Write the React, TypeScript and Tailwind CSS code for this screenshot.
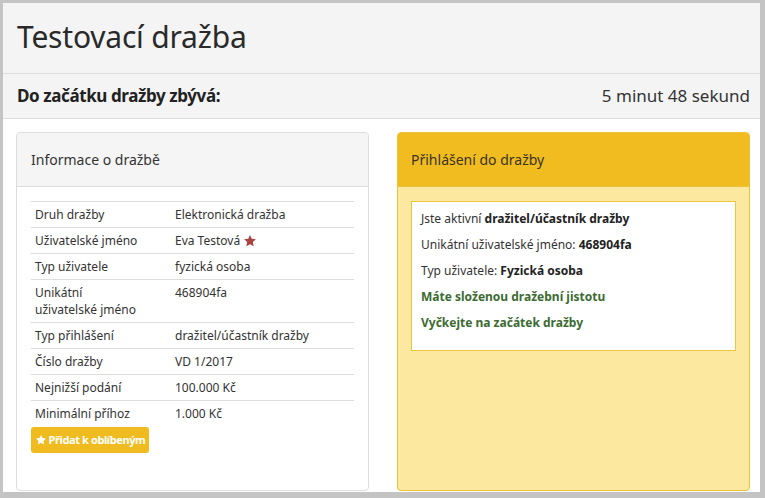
import React from 'react';

const font = { fontFamily: '"Noto Sans", "Open Sans", sans-serif' };

function Star({ className }: { className?: string }) {
  return (
    <svg viewBox="0 0 24 24" className={className} fill="currentColor" aria-hidden="true">
      <path d="M12 1.8l3.05 6.4 7.05.85-5.2 4.85 1.38 6.95L12 17.4l-6.28 3.45 1.38-6.95-5.2-4.85 7.05-.85z" />
    </svg>
  );
}

const rows: { label: React.ReactNode; value: React.ReactNode }[] = [
  { label: 'Druh dražby', value: 'Elektronická dražba' },
  {
    label: 'Uživatelské jméno',
    value: (
      <span className="inline-flex items-center gap-[3px]">
        Eva Testová <Star className="w-[14px] h-[14px] text-[#a94442]" />
      </span>
    ),
  },
  { label: 'Typ uživatele', value: 'fyzická osoba' },
  {
    label: (
      <>
        Unikátní
        <br />
        uživatelské jméno
      </>
    ),
    value: '468904fa',
  },
  { label: 'Typ přihlášení', value: 'dražitel/účastník dražby' },
  { label: 'Číslo dražby', value: 'VD 1/2017' },
  { label: 'Nejnižší podání', value: '100.000 Kč' },
  { label: 'Minimální příhoz', value: '1.000 Kč' },
];

export default function App() {
  return (
    <div className="w-[765px] h-[498px] bg-[#c4c4c4] pt-[3px] pl-[3px] pr-[5px] pb-[6px]" style={font}>
      <div className="bg-white h-full overflow-hidden flex flex-col text-[#333]">
        {/* Title */}
        <div className="h-[71px] shrink-0 bg-[#f4f4f4] border-b border-[#dcdcdc] flex items-center px-[14px]">
          <h1 className="text-[30px] leading-none text-[#2a2a2a] tracking-[-0.2px] pb-[2px]">Testovací dražba</h1>
        </div>

        {/* Countdown */}
        <div className="h-[45px] shrink-0 bg-[#f4f4f4] border-b border-[#dcdcdc] flex items-center justify-between pl-[14px] pr-[10px]">
          <span className="text-[17px] font-bold text-[#222] tracking-[-0.4px]">Do začátku dražby zbývá:</span>
          <span className="text-[17px] text-[#333]">5 minut 48 sekund</span>
        </div>

        <div className="flex-1 flex gap-[28px] pl-[13px] pr-[10px] pt-[13px] pb-[1px] min-h-0">
          {/* Left panel */}
          <div className="w-[353px] border border-[#dddddd] rounded-[4px] flex flex-col">
            <div className="h-[54px] shrink-0 bg-[#f5f5f5] border-b border-[#dddddd] flex items-center px-[14px] rounded-t-[4px]">
              <span className="text-[14px] text-[#333]">Informace o dražbě</span>
            </div>
            <div className="px-[14px] pt-[14px]">
              <table className="w-full text-[12px] text-[#333] border-collapse">
                <tbody>
                  {rows.map((r, i) => (
                    <tr key={i} className="border-t border-[#dddddd]">
                      <td className="w-[144px] pl-[4px] pr-[8px] py-[4px] align-top leading-[17px]">{r.label}</td>
                      <td className="py-[4px] align-top leading-[17px]">{r.value}</td>
                    </tr>
                  ))}
                </tbody>
              </table>
              <button className="mt-[1px] h-[26px] w-[118px] bg-[#efbb1f] rounded-[3px] text-white text-[11px] font-bold flex items-center justify-center gap-[2px] tracking-[-0.4px] whitespace-nowrap">
                <Star className="w-[12px] h-[12px] shrink-0" />
                Přidat k oblíbeným
              </button>
            </div>
          </div>

          {/* Right panel */}
          <div className="w-[353px] border border-[#ecc23a] rounded-[4px] bg-[#fde8a0] flex flex-col">
            <div className="h-[54px] shrink-0 bg-[#f0bc1f] border-b border-[#ecc23a] flex items-center px-[13px] rounded-t-[3px]">
              <span className="text-[14px] text-[#3b3320]">Přihlášení do dražby</span>
            </div>
            <div className="px-[13px] pt-[14px]">
              <div className="bg-white border border-[#edc540] px-[9px] pt-[9px] pb-[9px] text-[12px] text-[#333] leading-[16px]">
                <p className="mb-[10px]">
                  Jste aktivní <b className="text-[#222]">dražitel/účastník dražby</b>
                </p>
                <p className="mb-[10px]">
                  Unikátní uživatelské jméno: <b className="text-[#222]">468904fa</b>
                </p>
                <p className="mb-[10px]">
                  Typ uživatele: <b className="text-[#222]">Fyzická osoba</b>
                </p>
                <p className="mb-[10px] font-bold text-[#3c6b32]">Máte složenou dražební jistotu</p>
                <p className="mb-[10px] font-bold text-[#3c6b32]">Vyčkejte na začátek dražby</p>
              </div>
            </div>
          </div>
        </div>
      </div>
    </div>
  );
}
